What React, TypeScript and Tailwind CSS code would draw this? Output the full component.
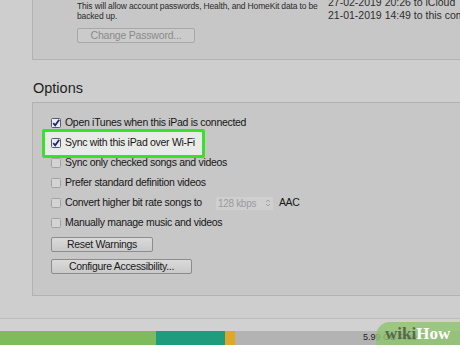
import React from 'react';

function CheckBox({ checked }: { checked?: boolean }) {
  return (
    <svg width="10" height="10" viewBox="0 0 10 10" className="shrink-0">
      <rect
        x="0.5"
        y="0.5"
        width="9"
        height="9"
        rx="1"
        fill={checked ? '#eceef4' : '#d3d3d3'}
        stroke={checked ? '#5a5a64' : '#a2a2a2'}
      />
      {checked && (
        <path d="M2.2 5.2 L4.2 7.3 L8.2 1.8" fill="none" stroke="#1d2b70" strokeWidth="1.8" />
      )}
    </svg>
  );
}

function OptionRow({ label, checked, children }: { label: string; checked?: boolean; children?: React.ReactNode }) {
  return (
    <div className="h-[20px] flex items-center gap-[4px] relative z-10">
      <CheckBox checked={checked} />
      <span>{label}</span>
      {children}
    </div>
  );
}

function ItunesButton({ label, width }: { label: string; width: string }) {
  return (
    <div
      className={`${width} h-[15px] flex items-center justify-center rounded-[2px] border border-[#8c8c8c] bg-gradient-to-b from-[#dadada] to-[#c9c9c9] text-[#1a1a1a]`}
    >
      {label}
    </div>
  );
}

export default function App() {
  return (
    <div className="w-[460px] h-[345px] overflow-hidden bg-[#cecece] flex flex-col relative font-['Liberation_Sans',Arial,sans-serif]">
      {/* Backup panel, cut at the top */}
      <div className="ml-[32px] h-[60px] shrink-0 border-l border-b border-[#b2b2b2] bg-[#c7c7c7] flex overflow-hidden">
        <div className="w-[295px] shrink-0 pl-[44px] pt-[1px]">
          <p className="text-[8.5px] leading-[10px] tracking-[-0.15px] text-[#2a2a2a]">
            This will allow account passwords, Health, and HomeKit data to be
            <br />
            backed up.
          </p>
          <div className="mt-[7px] w-[118px] h-[15px] flex items-center justify-center rounded-[2px] border border-[#a8a8a8] bg-[#cbcbcb] text-[10.5px] tracking-[-0.2px] text-[#8a8a8a]">
            Change Password...
          </div>
        </div>
        <div className="-mt-[4px] text-[10.5px] leading-[13px] text-[#2e2e2e] whitespace-nowrap">
          <div>27-02-2019 20:26 to iCloud</div>
          <div>21-01-2019 14:49 to this computer</div>
        </div>
      </div>

      {/* Options */}
      <h2 className="mt-[20px] ml-[33px] text-[14.5px] leading-[17px] text-[#1e1e1e]">Options</h2>
      <div className="mt-[5px] ml-[32px] h-[194px] shrink-0 border-l border-t border-b border-[#b2b2b2] bg-[#c7c7c7] pl-[18px] pt-[10px] text-[10.5px] tracking-[-0.3px] text-[#161616]">
        <OptionRow label="Open iTunes when this iPad is connected" checked />
        <div className="relative">
          <div className="absolute left-[-9px] top-[-4px] w-[163px] h-[29px] rounded-[2px] border-[3px] border-[#3ae02b] bg-[#e9ebe9]" />
          <OptionRow label="Sync with this iPad over Wi-Fi" checked />
        </div>
        <OptionRow label="Sync only checked songs and videos" />
        <OptionRow label="Prefer standard definition videos" />
        <OptionRow label="Convert higher bit rate songs to">
          <div className="ml-[10px] w-[57px] h-[13px] flex items-center justify-between px-[2px] bg-[#cfcfcf] text-[#9b9b9b] text-[10px]">
            <span>128 kbps</span>
            <svg width="6" height="8" viewBox="0 0 6 8">
              <path d="M1 3 L3 1 L5 3 M1 5 L3 7 L5 5" fill="none" stroke="#a0a0a0" strokeWidth="1" />
            </svg>
          </div>
          <span className="ml-[2px]">AAC</span>
        </OptionRow>
        <OptionRow label="Manually manage music and videos" />
        <div className="mt-[4px] flex flex-col gap-[7px]">
          <ItunesButton label="Reset Warnings" width="w-[102px]" />
          <ItunesButton label="Configure Accessibility..." width="w-[141px]" />
        </div>
      </div>

      {/* Storage bar */}
      <div className="h-[22px] shrink-0" />
      <div className="h-[1px] bg-[#bcbcbc] shrink-0" />
      <div className="h-[12px] bg-[#d1d1d1] shrink-0" />
      <div className="h-[14px] shrink-0 flex">
        <div className="w-[156px] bg-[#7dbb5d]" />
        <div className="w-[69px] bg-[#1f9b7d]" />
        <div className="w-[10px] bg-[#dea826]" />
        <div className="flex-1 bg-[#b3b3b3] pl-[128px] flex items-center text-[9px] text-[#222]">
          5.99 GB Free
        </div>
      </div>

      {/* watermark */}
      <div className="absolute right-0 bottom-0 w-[84px] h-[23px] rounded-tl-[14px] bg-[#8fc46e]/80 flex items-center pl-[9px] font-['Liberation_Serif',serif] font-bold text-[17px] leading-none">
        <span className="text-[#58684f]">wiki</span>
        <span className="text-white">How</span>
      </div>
    </div>
  );
}
